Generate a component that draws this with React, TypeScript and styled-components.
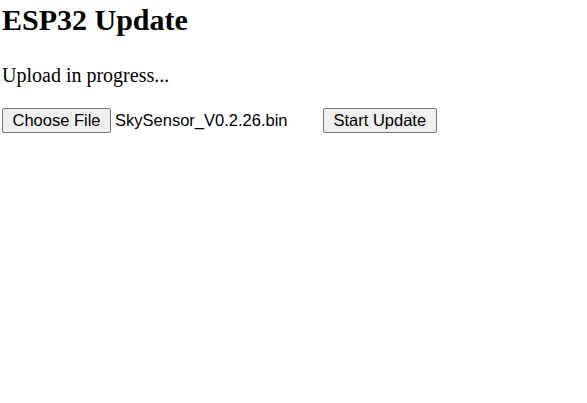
import React from "react";
import styled, { createGlobalStyle } from "styled-components";

const Global = createGlobalStyle`
  html, body { margin: 0; padding: 0; background: #ffffff; }
  body { font-family: "Liberation Serif", "Times New Roman", serif; color: #000; }
`;

const Page = styled.main`
  display: flex;
  flex-direction: column;
  align-items: flex-start;
  padding: 3px 2px;
`;

const Title = styled.h1`
  margin: 0;
  font-family: "Liberation Serif", "Times New Roman", serif;
  font-size: 30px;
  font-weight: bold;
  line-height: normal;
`;

const Status = styled.p`
  margin: 27px 0 0 0;
  font-size: 20px;
  line-height: normal;
`;

const Form = styled.form`
  display: flex;
  align-items: center;
  gap: 4px;
  margin-top: 21px;
`;

const FilePicker = styled.div`
  display: flex;
  align-items: center;
  gap: 4px;
  width: 317px;
`;

const Button = styled.button`
  display: inline-flex;
  align-items: center;
  justify-content: center;
  height: 25px;
  padding: 0 9.5px;
  margin: 0;
  font-family: "Liberation Sans", Arial, sans-serif;
  font-size: 16.5px;
  color: #000;
  background: #efefef;
  border: 1px solid #767676;
  border-radius: 2px;
  white-space: nowrap;
`;

const FileName = styled.span`
  font-family: "Liberation Sans", Arial, sans-serif;
  font-size: 16.5px;
  color: #000;
  white-space: nowrap;
`;

export default function App() {
  return (
    <>
      <Global />
      <Page>
        <Title>ESP32 Update</Title>
        <Status>Upload in progress...</Status>
        <Form onSubmit={(e) => e.preventDefault()}>
          <FilePicker>
            <Button type="button">Choose File</Button>
            <FileName>SkySensor_V0.2.26.bin</FileName>
          </FilePicker>
          <Button type="submit">Start Update</Button>
        </Form>
      </Page>
    </>
  );
}
